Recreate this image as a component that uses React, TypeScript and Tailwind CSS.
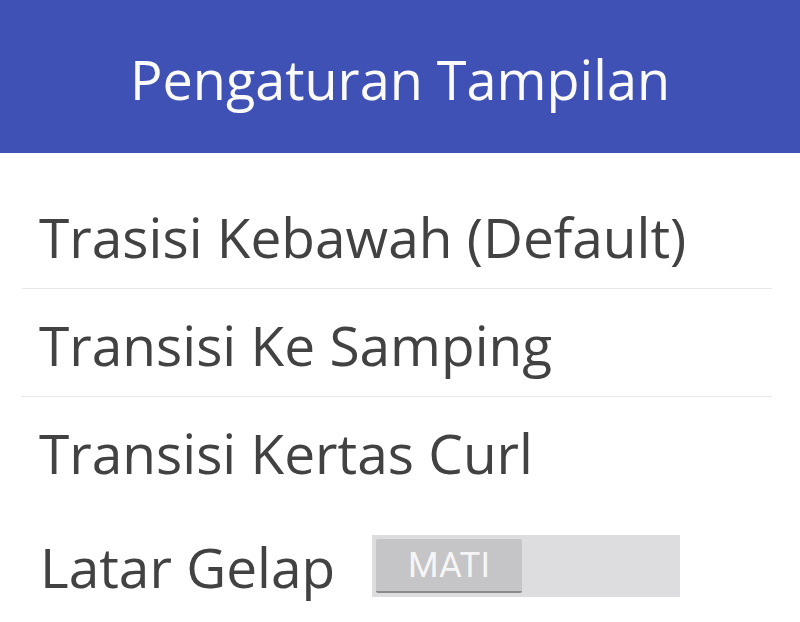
import React, { useState } from 'react';

const rows = ['Trasisi Kebawah (Default)', 'Transisi Ke Samping', 'Transisi Kertas Curl'];

const labelFont = { fontFamily: '"Open Sans", sans-serif' } as const;

export default function App() {
    const [dark, setDark] = useState(false);

    return (
        <div className="w-[800px] h-[622px] bg-white overflow-hidden">
            <div className="h-[153px] bg-[#3f51b5] flex items-center justify-center pt-[4px]">
                <h1 className="text-[54px] leading-none font-medium text-[#fafafa]" style={labelFont}>Pengaturan Tampilan</h1>
            </div>
            <div className="pt-[28px]">
                {rows.map((r, i) => (
                    <div key={r} className={`ml-[22px] mr-[28px] h-[108px] flex items-center pl-[17px] pt-[3px] ${i < 2 ? 'border-b border-[#e6e6e6]' : ''}`}>
                        <span className="text-[55px] leading-none font-medium text-[#424242]" style={labelFont}>{r}</span>
                    </div>
                ))}
                <div className="ml-[22px] mr-[28px] h-[122px] flex items-center pl-[18px]">
                    <span className="text-[55px] leading-none font-medium text-[#424242] w-[332px]" style={labelFont}>Latar Gelap</span>
                    <button onClick={() => setDark(!dark)} className="w-[308px] h-[62px] bg-[#dddcde] p-[4px] flex">
                        <div className="w-[146px] h-full bg-[#c5c4c6] border-b-2 border-[#8a8a8a] rounded-[2px] flex items-center justify-center">
                            <span className="text-[35px] leading-none text-[#f5f5f5]" style={{ fontFamily: 'Roboto, sans-serif' }}>{dark ? 'HIDUP' : 'MATI'}</span>
                        </div>
                    </button>
                </div>
            </div>
        </div>
    );
}
